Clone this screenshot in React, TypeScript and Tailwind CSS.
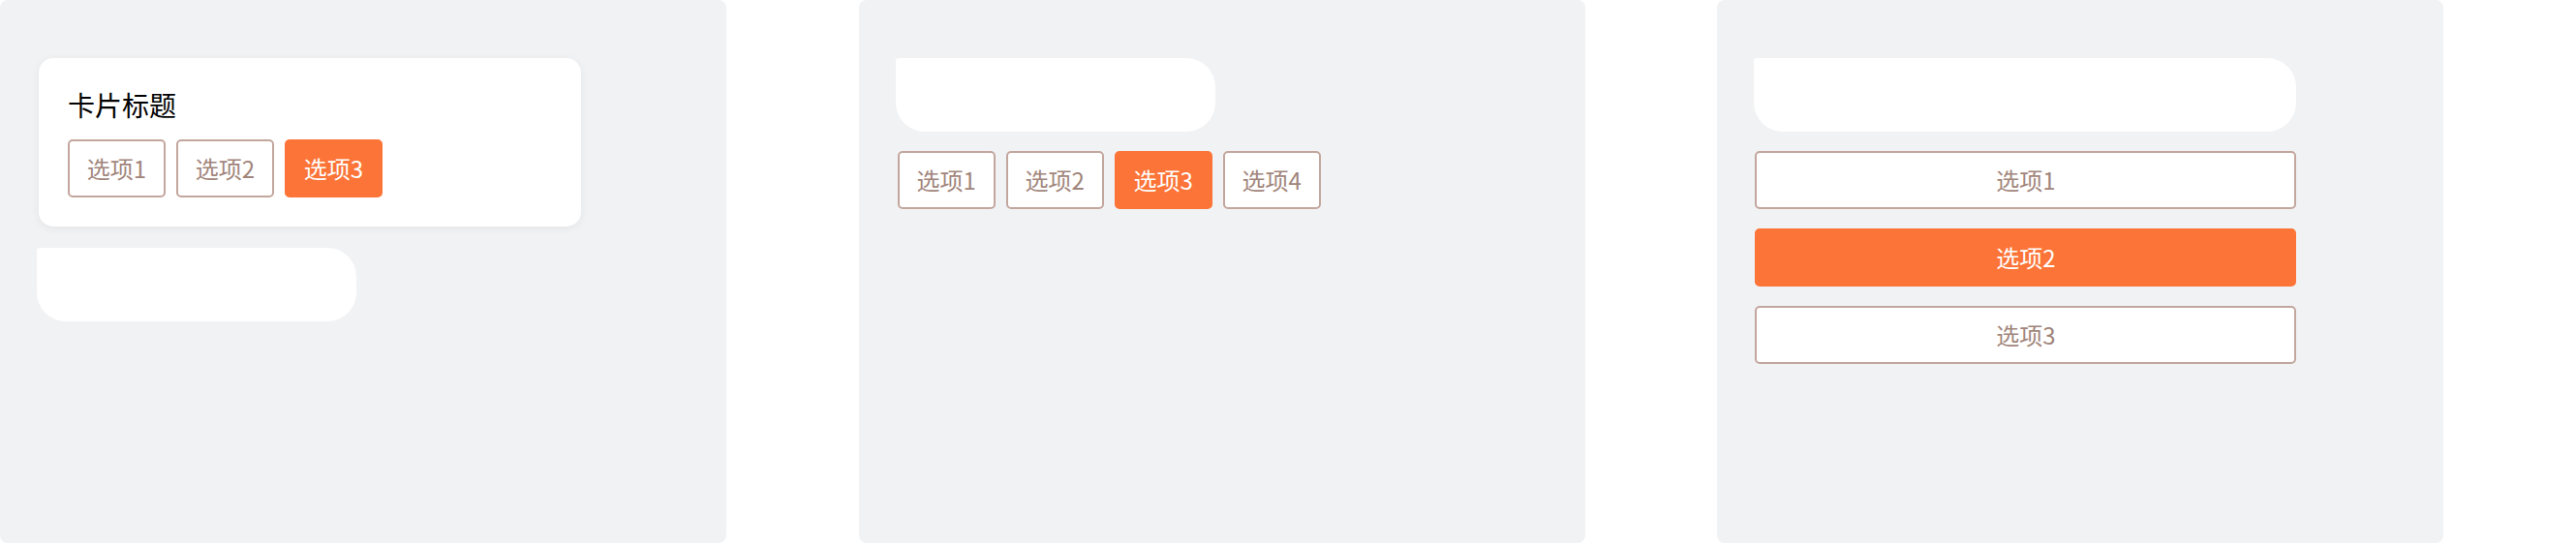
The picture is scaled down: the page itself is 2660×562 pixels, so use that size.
import React from "react";

const font = { fontFamily: '"Noto Sans CJK SC", "Noto Sans", sans-serif' };

function Option({ label, active, className = "" }: { label: string; active?: boolean; className?: string }) {
  return (
    <div
      className={
        "flex h-[60px] items-center justify-center rounded-[5px] border-2 text-[24px] " +
        (active
          ? "border-[#fc7437] bg-[#fc7437] text-white "
          : "border-[#c3a69d] bg-white text-[#a1857b] ") +
        className
      }
    >
      {label}
    </div>
  );
}

function Placeholder({ className = "" }: { className?: string }) {
  return <div className={"h-[76px] rounded-[3px_30px_30px_30px] bg-white " + className} />;
}

function Panel({ children }: { children: React.ReactNode }) {
  return (
    <div className="h-[561px] w-[750px] rounded-lg bg-[#f1f2f4] px-[38px] pt-[60px]">{children}</div>
  );
}

export default function App() {
  return (
    <div className="grid h-[562px] w-[2660px] grid-cols-3 bg-white" style={font}>
      {/* card with title and a row of options */}
      <Panel>
        <div className="ml-[2px] w-[560px] rounded-[15px] bg-white p-[30px] shadow-[0_2px_10px_rgba(0,0,0,0.06)]">
          <h2 className="mb-[18px] text-[28px] leading-[36px] text-black">卡片标题</h2>
          <div className="flex gap-[11px]">
            <Option label="选项1" className="w-[101px]" />
            <Option label="选项2" className="w-[101px]" />
            <Option label="选项3" active className="w-[101px]" />
          </div>
        </div>
        <Placeholder className="mt-[22px] w-[330px]" />
      </Panel>

      {/* inline options */}
      <Panel>
        <Placeholder className="w-[330px]" />
        <div className="ml-[2px] mt-5 flex gap-[11px]">
          <Option label="选项1" className="w-[101px]" />
          <Option label="选项2" className="w-[101px]" />
          <Option label="选项3" active className="w-[101px]" />
          <Option label="选项4" className="w-[101px]" />
        </div>
      </Panel>

      {/* stacked options */}
      <Panel>
        <Placeholder className="w-[560px]" />
        <div className="ml-[1px] mt-5 flex w-[559px] flex-col gap-5">
          <Option label="选项1" />
          <Option label="选项2" active />
          <Option label="选项3" />
        </div>
      </Panel>
    </div>
  );
}
